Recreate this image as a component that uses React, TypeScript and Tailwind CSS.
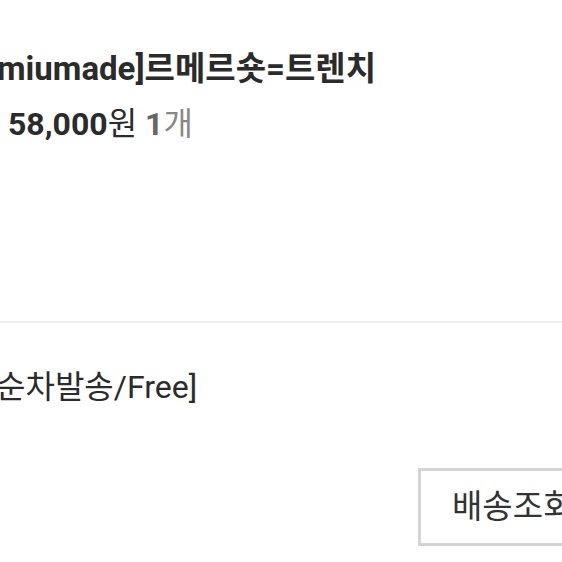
import React from "react";

export default function App() {
  const font = { fontFamily: "Roboto, 'Noto Sans CJK KR', sans-serif" };
  return (
    <div className="w-[562px] h-[562px] overflow-hidden bg-white relative" style={font}>
      <div className="pt-[47px]">
        <div className="text-[33px] leading-[44px] font-bold text-[#2b2b2b] whitespace-nowrap ml-[-3px]">
          miumade]르메르숏=트렌치
        </div>
        <div className="mt-[11px] pl-[8px] text-[32px] leading-[44px] whitespace-nowrap">
          <span className="font-bold text-[#2b2b2b]">58,000</span>
          <span className="text-[#2b2b2b]">원 </span>
          <span className="font-bold text-[#666]">1</span>
          <span className="text-[#888]">개</span>
        </div>
      </div>
      <div className="mt-[175px] h-[2px] bg-[#eeeeee]" />
      <div className="pt-[42px] text-[32px] leading-[44px] text-[#2b2b2b] whitespace-nowrap ml-[-4px]">
        순차발송/Free]
      </div>
      <div className="flex justify-start pl-[418px] mt-[59px]">
        <div className="h-[78px] w-[200px] shrink-0 border-[3px] border-[#d4d4d4] flex items-center pl-[31px] text-[33px] text-[#333] whitespace-nowrap">
          배송조회
        </div>
      </div>
    </div>
  );
}
